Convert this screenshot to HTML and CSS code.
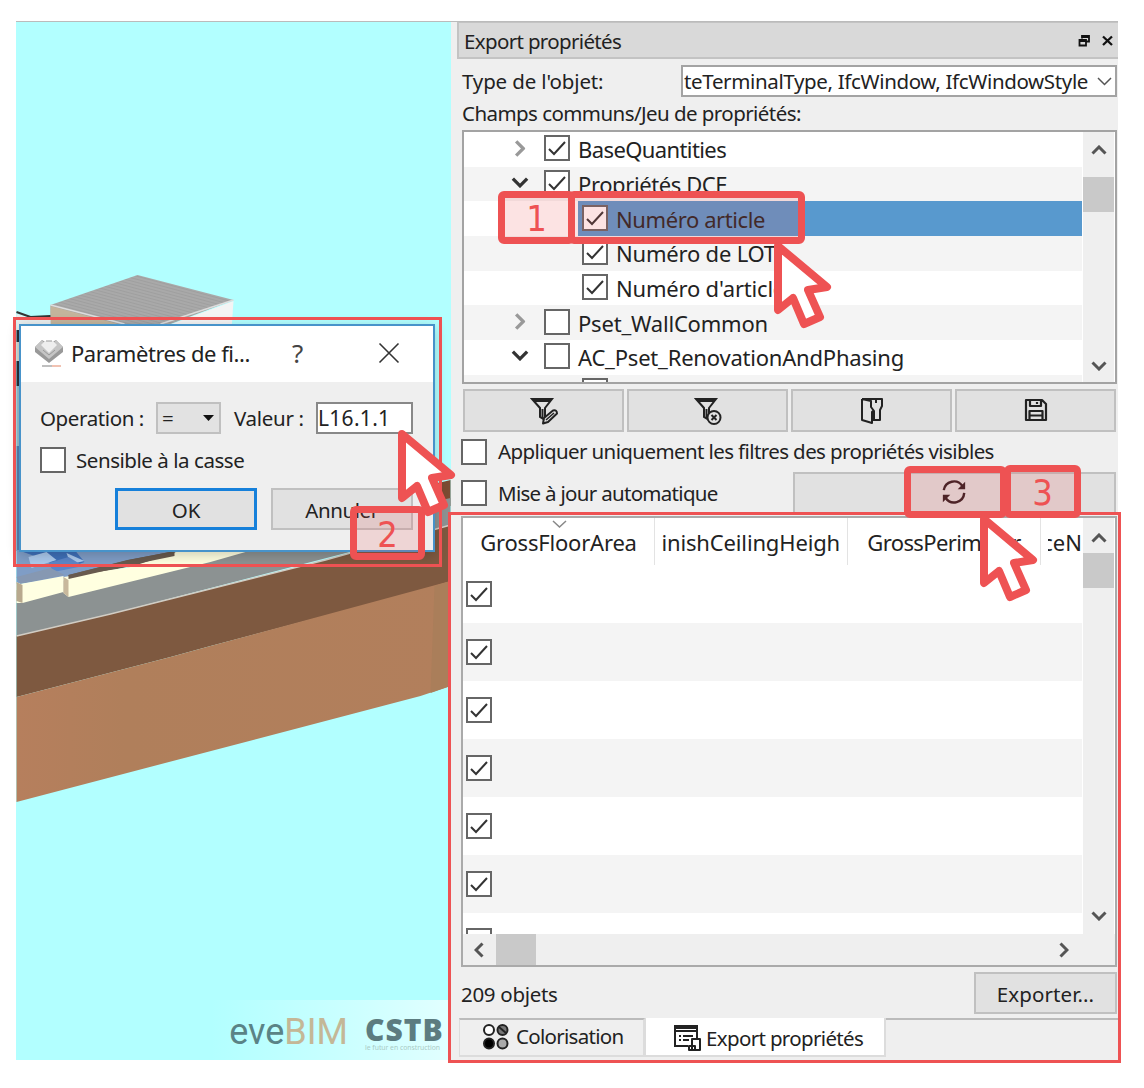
FILE: index.html
```html
<!DOCTYPE html>
<html lang="fr">
<head>
<meta charset="utf-8">
<title>eveBIM - Export propriétés</title>
<link rel="stylesheet" href="styles.css">
</head>
<body>
<svg class="defs" width="0" height="0">
  <symbol id="check" viewBox="0 0 26 26"><path d="M5 14l5 5L21 7" fill="none" stroke="#333" stroke-width="2"/></symbol>
  <symbol id="chev" viewBox="0 0 16 10"><path d="M1.5 1.5L8 8l6.500-6.500" fill="none" stroke="currentColor" stroke-width="3"/></symbol>
  <symbol id="funnel" viewBox="0 0 28 28"><path d="M2 2h20l-7 9v12l-5-3v-9zM4 4h16M12.500 12v9" fill="none" stroke="#222" stroke-width="2"/></symbol>
  <symbol id="cursor" viewBox="0 0 60 92"><path d="M6 7L55 48L36 51L48 78L32 85L21 59L6 71Z" fill="#fff" stroke="#ee5253" stroke-width="8" stroke-linejoin="round"/></symbol>
</svg>
<main class="app">
  <section class="viewport">
    <svg class="scene" viewBox="16 22 434 1038">
      <defs>
        <pattern id="tiles" width="4" height="3" patternUnits="userSpaceOnUse" patternTransform="rotate(15)"><rect width="4" height="3" fill="#a9a9a9"/><path d="M0 .5h4" stroke="#9f9f9f"/></pattern>
        <linearGradient id="earth"><stop offset="0" stop-color="#b67f5d"/><stop offset=".25" stop-color="#b07f5b"/><stop offset="1" stop-color="#b27f5c"/></linearGradient>
        <linearGradient id="haze"><stop offset="0" stop-color="#d8ffff" stop-opacity="0"/><stop offset="1" stop-color="#e2ffff"/></linearGradient>
      </defs>
      <path d="M50 305L137 275L233 300L170 324H50Z" fill="url(#tiles)"/>
      <path d="M50 306L118 324H50Z" fill="#c3b49c"/>
      <path d="M233 301L231 330H155Z" fill="#f4f4f4"/>
      <path d="M50 305L124 324M233 300L160 324" stroke="#ddd" stroke-width="1.500" fill="none"/>
      <path d="M16 314L30 318H50V345H16Z" fill="#e9eeee"/>
      <path d="M16 312L30 317L50 316" stroke="#333" stroke-width="2" fill="none"/>
      <path d="M16 330h6v12h-6zM16 361h6v25h-6z" fill="#25303a"/>
      <path d="M16 342h6v19h-6z" fill="#d8d8d0"/>
      <path d="M16 386h6v60h-6z" fill="#9abfce"/>
      <path d="M16 446h6v105h-6z" fill="#5b7fae"/>
      <path d="M434 484L450 480V506H434Z" fill="#7b4b32"/>
      <path d="M16 590L240 545L450 498V526L110 614L16 636Z" fill="#8c9292"/>
      <path d="M16 550H180L100 574L16 584Z" fill="#7f9dc6"/>
      <path d="M20 551H75L84 562L62 570L45 560Z" fill="#3f70b8"/>
      <path d="M28 557l18-5 10 8-25 8zM66 553l18 8-14 3z" fill="#abc9ec"/>
      <path d="M48 563l20-6 15 9-30 6z" fill="#5c86c8"/>
      <path d="M16 577L50 568L64 575L20 584Z" fill="#8698b2"/>
      <path d="M68 575L127 560L175 551V557L68 579Z" fill="#685a4e"/>
      <path d="M20 584L63 576V592L22 603H16V582Z" fill="#ffffe2"/>
      <path d="M16 582L22 585V603L16 601Z" fill="#b8a98e"/>
      <path d="M63 577L130 567L176 552H245L210 562L68 597L63 593Z" fill="#ffffe0"/>
      <path d="M68 575L128 560L174 551V556L130 565L68 579Z" fill="#685a4e"/>
      <path d="M63 577L68 580V597L63 593Z" fill="#c8b89c"/>
      <path d="M16 636L110 614L325 560L450 525V583L210 646L170 657L16 697Z" fill="#7e5940"/>
      <path d="M16 636L110 614L325 560L450 525" fill="none" stroke="#d2cdc4" stroke-width="1.500"/>
      <path d="M16 697L170 657L210 646L450 581V686L420 696L16 802Z" fill="url(#earth)"/>
      <path d="M434 586L450 581V686L430 693Z" fill="#aa7e5a"/>
      <path d="M210 1000H450V1060H210Z" fill="url(#haze)"/>
    </svg>
    <div class="brand"><span class="eve">eve<b>BIM</b></span><span class="cstb"><strong>CSTB</strong><small>le futur en construction</small></span></div>
  </section>

  <section class="panel">
    <header class="dock"><span class="s-dock">Export propriétés</span>
      <svg width="38" height="14" viewBox="0 0 38 14"><path d="M5 4.500V2h7v5.500H9M2.500 6h6.500v5.500H2.500zM2.500 7H9M5 3h7" fill="none" stroke="#111" stroke-width="1.800"/><path d="M26 2.500l9 8.500M35 2.500L26 11" stroke="#111" stroke-width="2.300"/></svg>
    </header>
    <div class="type"><span class="s-type">Type de l'objet:</span><div class="combo"><span class="s-combo">teTerminalType, IfcWindow, IfcWindowStyle</span><svg width="15" height="9" viewBox="0 0 15 9"><path d="M1 1l6.500 6.500L14 1" fill="none" stroke="#555" stroke-width="1.500"/></svg></div></div>
    <div class="fields s-fields">Champs communs/Jeu de propriétés:</div>

    <div class="tree">
      <div class="rows">
        <div class="row"><svg class="arrow shut"><use href="#chev"/></svg><i class="box"><svg><use href="#check"/></svg></i><span class="s-base">BaseQuantities</span></div>
        <div class="row"><svg class="arrow"><use href="#chev"/></svg><i class="box"><svg><use href="#check"/></svg></i><span class="s-dce">Propriétés DCE</span></div>
        <div class="row child selected"><i class="box"><svg><use href="#check"/></svg></i><span class="s-num">Numéro article</span></div>
        <div class="row child"><i class="box"><svg><use href="#check"/></svg></i><span class="s-lot">Numéro de LOT</span></div>
        <div class="row child"><i class="box"><svg><use href="#check"/></svg></i><span class="s-lot">Numéro d'article</span></div>
        <div class="row"><svg class="arrow shut"><use href="#chev"/></svg><i class="box"></i><span class="s-wall">Pset_WallCommon</span></div>
        <div class="row"><svg class="arrow"><use href="#chev"/></svg><i class="box"></i><span class="s-ac">AC_Pset_RenovationAndPhasing</span></div>
        <div class="row child"><i class="box"></i></div>
      </div>
      <div class="vbar tall"><svg class="up"><use href="#chev"/></svg><i class="thumb"></i><svg class="down"><use href="#chev"/></svg></div>
    </div>

    <div class="tools">
      <button><svg width="28" height="28" viewBox="0 0 28 28"><use href="#funnel" width="28" height="28"/><path d="M13 26.500l1-5.500 9-7.500q4-1 4 3L18 25z" fill="#e1e1e1" stroke="#222" stroke-width="2" stroke-linejoin="round"/><path d="M16 23l8-7" stroke="#222" stroke-width="1.500"/></svg></button>
      <button><svg width="28" height="28" viewBox="0 0 28 28"><use href="#funnel" width="28" height="28"/><circle cx="20" cy="20.500" r="6.500" fill="#e1e1e1" stroke="#222" stroke-width="2"/><path d="M17.500 18l5 5M22.500 18l-5 5" stroke="#222" stroke-width="2"/></svg></button>
      <button><svg width="26" height="28" viewBox="0 0 26 28"><path d="M3 2h20v7l-2 4v10h-6M3 2v21l10 3V15l2-2M3 2l9 2v6l3 4v10M17 3v3" fill="none" stroke="#222" stroke-width="2" stroke-linejoin="round"/></svg></button>
      <button><svg width="26" height="28" viewBox="0 0 26 28"><path d="M3 3h16l4 4v16H3zM7 3v6h11V3M6.500 23v-9h13v9M7 18.500h12M14 5v2" fill="none" stroke="#222" stroke-width="2.200" stroke-linejoin="round"/></svg></button>
    </div>

    <div class="option first"><i class="box"></i><span class="s-apply">Appliquer uniquement les filtres des propriétés visibles</span></div>
    <div class="option second"><i class="box"></i><span class="s-auto">Mise à jour automatique</span>
      <button class="refresh"><svg width="26" height="26" viewBox="0 0 28 28"><path d="M3 12A11 11 0 0 1 23 7.500M25 15A11 11 0 0 1 5 20.500" fill="none" stroke="#301b20" stroke-width="2.600"/><path d="M26 3v8h-8zM2 25v-8h8z" fill="#301b20"/></svg></button>
    </div>

    <div class="table">
      <div class="upper">
        <div class="grid">
          <div class="thead">
            <div class="th"><svg class="sort" viewBox="0 0 15 8"><path d="M1 1l6.500 6L14 1" fill="none" stroke="#888" stroke-width="1.500"/></svg><span class="s-floor">GrossFloorArea</span></div>
            <div class="th"><span class="cut"><span class="s-ceil">FinishCeilingHeigh</span></span></div>
            <div class="th"><span class="s-perim">GrossPerimeter</span></div>
            <div class="th last"><span class="cut"><span>ceN</span></span></div>
          </div>
          <div class="tr"><i class="box"><svg><use href="#check"/></svg></i></div>
          <div class="tr"><i class="box"><svg><use href="#check"/></svg></i></div>
          <div class="tr"><i class="box"><svg><use href="#check"/></svg></i></div>
          <div class="tr"><i class="box"><svg><use href="#check"/></svg></i></div>
          <div class="tr"><i class="box"><svg><use href="#check"/></svg></i></div>
          <div class="tr"><i class="box"><svg><use href="#check"/></svg></i></div>
          <div class="tr"><i class="box"></i></div>
        </div>
        <div class="vbar"><svg class="up"><use href="#chev"/></svg><i class="thumb"></i><svg class="down"><use href="#chev"/></svg></div>
      </div>
      <div class="hbar"><svg class="left"><use href="#chev"/></svg><i class="thumb"></i><svg class="right"><use href="#chev"/></svg></div>
    </div>

    <div class="footer"><span class="s-count">209 objets</span><button><span class="s-exp">Exporter...</span></button></div>
    <nav class="tabs">
      <div class="tab"><svg width="27" height="27" viewBox="0 0 27 27"><g stroke="#222" stroke-width="2"><circle cx="7" cy="7" r="5" fill="#fff"/><circle cx="20.500" cy="7" r="5" fill="#777"/><path d="M17 4l7 6"/><circle cx="7" cy="20.500" r="5" fill="#000"/><circle cx="20.500" cy="20.500" r="5" fill="#aaa"/></g></svg><span class="s-color">Colorisation</span></div>
      <div class="tab active"><svg width="28" height="28" viewBox="0 0 28 28"><path d="M15 22H2V2h22v12M2 7h22M2 4h22M6 12h2m2 0h10M6 16h2m2 0h6" fill="none" stroke="#222" stroke-width="2"/><path d="M19 15h8v11h-8zM16 22h6v4h-6z" fill="#fff" stroke="#222" stroke-width="2" stroke-linejoin="round"/></svg><span class="s-tab">Export propriétés</span></div>
      <div class="rest"></div>
    </nav>
  </section>
</main>

<section class="dialog">
  <header><svg width="30" height="30" viewBox="0 0 30 30"><path d="M1 9L8 2l7 4 7-4 7 7v5L15 25 1 14z" fill="#999"/><path d="M1 9l7-7 7 9 7-9 7 7-14 12z" fill="#c5c5c5"/><path d="M7 7l8 8 8-8-4-4h-8z" fill="#eee"/><path d="M12 3h6M9 12l6 5 6-5" stroke="#999" fill="none"/><path d="M8 28h10" stroke="#aaa" stroke-width="1.500"/><path d="M18 28h9" stroke="#edae98" stroke-width="1.500"/></svg>
    <span class="s-title">Paramètres de fi...</span><span class="help">?</span><svg width="22" height="22" viewBox="0 0 22 22"><path d="M1.500 1.500l19 19M20.500 1.500l-19 19" stroke="#333" stroke-width="1.600"/></svg></header>
  <div class="form">
    <div class="line"><span class="oper s-oper">Operation :</span><div class="pick"><span>=</span><svg width="11" height="6" viewBox="0 0 11 6"><path d="M0 0h11L5.500 6z" fill="#111"/></svg></div><span class="valeur s-val">Valeur :</span><div class="input s-input">L16.1.1</div></div>
    <div class="case"><i class="box"></i><span class="s-case">Sensible à la casse</span></div>
    <div class="actions"><button class="ok">OK</button><button class="s-cancel">Annuler</button></div>
  </div>
</section>

<div class="frame dialog-frame"></div>
<div class="frame table-frame"></div>
<div class="mark one">1</div>
<div class="mark article"></div>
<div class="mark two">2</div>
<div class="mark reload"></div>
<div class="mark three">3</div>
<svg class="cursor c1"><use href="#cursor"/></svg>
<svg class="cursor c2"><use href="#cursor"/></svg>
<svg class="cursor c3"><use href="#cursor"/></svg>
</body>
</html>
```
FILE: styles.css
```css
* { box-sizing: border-box; }
body { margin: 0; width: 1144px; height: 1088px; overflow: hidden; position: relative; background: #fff; color: #222; font: 20.5px/26px "Noto Sans", sans-serif; }
.defs { position: absolute; }
svg { display: block; flex: none; }
span { white-space: nowrap; }
button { margin: 0; padding: 0; display: flex; align-items: center; justify-content: center; background: #e1e1e1; border: 2px solid #c0c0c0; color: #222; font: inherit; }
.app { display: flex; width: 1102px; height: 1039px; margin: 21px 0 0 16px; border-top: 1px solid #bbb; }

/* letter fitting */
.s-dock, .s-tab { letter-spacing: -.65px; }
.s-type { letter-spacing: -.15px; }
.s-combo { letter-spacing: -.35px; }
.s-fields { letter-spacing: -.56px; }
.s-base { letter-spacing: -.6px; }
.s-dce, .s-num { letter-spacing: -.4px; }
.s-lot, .s-wall, .s-ac, .s-floor { letter-spacing: -.2px; }
.s-ceil { letter-spacing: -.15px; }
.s-apply { letter-spacing: -.6px; }
.s-auto, .s-color { letter-spacing: -.7px; }
.s-perim { letter-spacing: -.6px; }
.s-count, .s-val { letter-spacing: -.3px; }
.s-exp { letter-spacing: .1px; }
.s-title, .s-case { letter-spacing: -.45px; }
.s-oper, .s-cancel { letter-spacing: -.4px; }
.s-input { font-size: 21px; letter-spacing: .3px; }

.viewport { width: 435px; position: relative; background: #b2ffff; }
.scene { width: 435px; height: 1038px; }
.brand { position: absolute; right: 7px; bottom: 8px; display: flex; align-items: flex-end; gap: 17px; }
.eve { font: 36px/39px Roboto, sans-serif; color: #5a8386; font-weight: 400; letter-spacing: 0; }
.eve b { font-weight: 400; color: #c4b797; }
.cstb { display: flex; flex-direction: column; width: 79px; color: #5c7c80; }
.cstb strong { font: 900 30px/27px "Noto Sans", sans-serif; letter-spacing: 1px; }
.cstb small { font-size: 6.8px; line-height: 9px; color: #a9cbc5; white-space: nowrap; }

.panel { width: 667px; background: #efefef; display: flex; flex-direction: column; }
.dock { margin-left: 6px; height: 37px; padding: 2px 3px 0 5px; display: flex; align-items: center; justify-content: space-between; background: #d9d9d9; border: solid #c3c3c3; border-width: 1px 0 2px 2px; }
.type { height: 32px; margin: 6px 1px 0 11px; display: flex; align-items: center; justify-content: space-between; }
.combo { width: 436px; height: 32px; background: #fff; border: 2px solid #a3a3a3; display: flex; align-items: center; justify-content: space-between; padding: 0 3px 0 1px; }
.fields { height: 33px; padding: 3px 0 0 11px; }

.box { display: block; flex: none; width: 26px; height: 26px; background: #fff; border: 2px solid #666; }
.box svg { width: 26px; height: 26px; margin: -2px; }

.tree { margin: 0 1px 0 11px; height: 254px; display: flex; justify-content: space-between; overflow: hidden; background: #fff; border: 2px solid #a3a3a3; }
.rows { width: 618px; font-size: 22px; }
.row { height: 34.700px; padding-left: 47px; display: flex; align-items: center; background: #fff; }
.row .box { margin: 0 8px 0 0; transform: translateY(-1px); }
.row:nth-child(even) { background: #f4f4f4; }
.row.child { padding-left: 118px; }
.row.selected { background: linear-gradient(90deg, #fff 114px, #5899ce 114px); }
.arrow { width: 18px; height: 11px; margin-right: 15px; color: #333; transform: translateY(-2px); }
.arrow.shut { transform: translateY(-1px) rotate(-90deg); color: #999; }
.vbar { width: 31px; background: #efefef; display: flex; flex-direction: column; align-items: center; color: #555; margin-right: 1px; }
.vbar .thumb { width: 31px; height: 35px; background: #c9c9c9; }
.up, .down { width: 16px; height: 10px; }
.up { transform: rotate(180deg); margin: 15px 0 10px; }
.tall .up { margin: 13px 0 22px; }
.down { margin: auto 0 13px; }
.tall .down { margin-bottom: 11px; }

.tools { height: 43px; margin: 5px 2px 0 12px; display: grid; grid-template-columns: repeat(4, 1fr); gap: 3px; }
.option { display: flex; align-items: center; padding-left: 10px; }
.option .box { margin-right: 11px; }
.option span { padding-bottom: 1px; }
.first { height: 39px; }
.second { height: 43px; margin-top: 1px; padding-right: 2px; }
.second .box { transform: translateY(-1px); }
.refresh { width: 323px; height: 43px; margin-left: auto; padding: 0 2px 3px 0; }

.table { height: 451px; margin: 1px 1px 0 10px; border: 2px solid #aaa; background: #fff; }
.upper { display: flex; height: 416px; justify-content: space-between; overflow: hidden; }
.grid { width: 619px; }
.thead { display: flex; height: 47px; font-size: 22px; }
.th { width: 192px; position: relative; display: flex; justify-content: center; padding-top: 11px; border-right: 1px solid #e3e3e3; }
.th:nth-child(2) { width: 193px; }
.th:nth-child(3) { width: 193px; }
.th.last { width: 41px; border: 0; justify-content: flex-end; }
.sort { position: absolute; left: 89px; top: 2px; width: 15px; height: 8px; }
.cut { display: flex; justify-content: flex-end; overflow: hidden; width: 178px; }
.last .cut { width: 34px; }
.tr { height: 58px; padding-left: 3px; display: flex; align-items: center; }
.tr:nth-child(odd) { background: #f4f4f4; }
.tr:last-child { align-items: flex-start; padding-top: 15px; }
.hbar { height: 31px; display: flex; align-items: center; background: #efefef; color: #555; }
.hbar .thumb { width: 40px; height: 31px; background: #c9c9c9; }
.left, .right { width: 16px; height: 10px; }
.left { transform: rotate(90deg); margin: 0 9px 0 8px; }
.right { transform: rotate(-90deg); margin: 0 43px 0 auto; }

.footer { height: 47px; margin: 5px 1px 0 10px; display: flex; justify-content: space-between; align-items: flex-start; }
.footer > span { padding-top: 9px; }
.footer button { width: 143px; height: 42px; padding-top: 1px; }
.tabs { display: flex; height: 39px; margin: -1px 0 0 8px; }
.tab { width: 186px; padding: 0 0 3px 22px; display: flex; align-items: center; gap: 7px; border: solid #dcdcdc; border-width: 2px 2px 2px 1px; border-top-color: #bbb; }
.tab.active { width: 241px; background: #fff; border-top: 0; padding: 3px 0 0 27px; gap: 5px; }
.rest { flex: 1; border-top: 2px solid #bbb; }

.dialog { position: absolute; left: 19px; top: 324px; width: 416px; height: 228px; background: #efefef; border: 2px solid #4793ca; box-shadow: 0 3px 12px rgba(0,0,0,.2); }
.dialog header { height: 56px; display: flex; align-items: center; background: #fff; padding: 0 0 2px 13px; font-size: 22px; }
.dialog header .s-title { width: 215px; margin-left: 7px; }
.help { width: 92px; padding-left: 6px; font-size: 26px; color: #444; }
.form { padding: 20px 20px 0 19px; }
.line { display: flex; height: 32px; align-items: center; }
.oper { width: 116px; }
.pick { width: 65px; height: 32px; margin-right: 13px; padding: 0 5px 0 4px; display: flex; align-items: center; justify-content: space-between; background: #e2e2e2; border: 2px solid #c0c0c0; }
.valeur { width: 82px; }
.input { width: 97px; height: 32px; background: #fff; border: 2px solid #888; padding: 1px 0; }
.case { height: 27px; margin-top: 12px; display: flex; align-items: center; gap: 10px; }
.actions { display: flex; justify-content: flex-end; gap: 14px; margin-top: 15px; }
.actions button { width: 142px; height: 42px; padding-top: 1px; }
.actions .ok { border: 3px solid #1680da; }

.frame { position: absolute; border: 3px solid #ee5253; }
.dialog-frame { left: 13px; top: 317px; width: 429px; height: 250px; }
.table-frame { left: 448px; top: 512px; width: 673px; height: 551px; }
.mark { position: absolute; border: 7px solid #ee5253; border-radius: 6px; background: rgba(238,82,83,.16); color: #ee5253; font: 400 36px/41px "DejaVu Sans Condensed", "DejaVu Sans", sans-serif; text-align: center; }
.one { left: 498px; top: 191px; width: 77px; height: 53px; }
.article { left: 568px; top: 191px; width: 237px; height: 53px; }
.two { left: 350px; top: 506px; width: 75px; height: 54px; line-height: 43px; }
.reload { left: 904px; top: 466px; width: 103px; height: 52px; }
.three { left: 1004px; top: 465px; width: 77px; height: 53px; }
.cursor { position: absolute; width: 60px; height: 92px; }
.c1 { left: 772px; top: 239px; }
.c2 { left: 396px; top: 427px; }
.c3 { left: 978px; top: 512px; }
```
